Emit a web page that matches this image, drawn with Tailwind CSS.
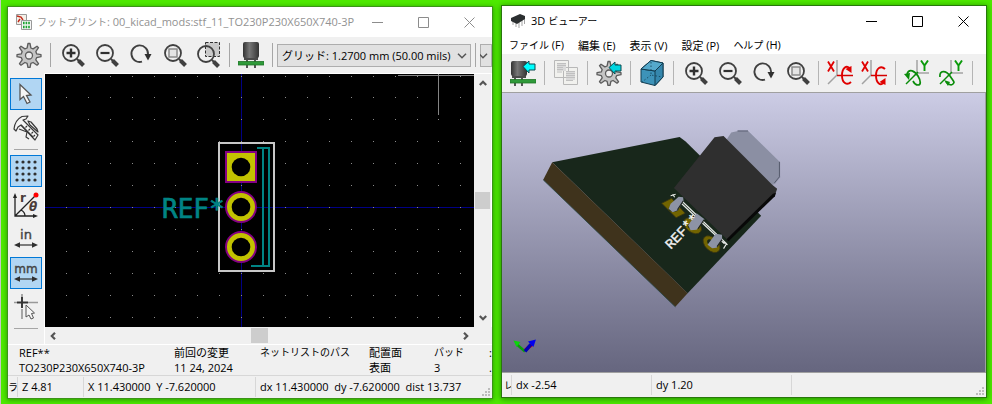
<!DOCTYPE html>
<html lang="ja">
<head>
<meta charset="utf-8">
<meta name="viewport" content="width=device-width, initial-scale=1">
<title>フットプリント / 3D ビューアー</title>
<script src="https://cdn.jsdelivr.net/npm/@tailwindcss/browser@4"></script>
</head>
<body class="h-screen overflow-hidden bg-[#4eea00] font-['Open_Sans','Noto_Sans_CJK_JP',sans-serif] text-[11px] leading-[15px] text-black">

<!-- Shared icon shapes -->
<svg class="absolute size-0" aria-hidden="true">
  <defs>
    <g id="lens" fill="none" stroke="#404040">
      <circle cx="12" cy="11" r="8" stroke-width="1.8"/>
      <path d="M18 17l2 2" stroke-width="2"/>
      <path d="M19.5 18.5l5 5" stroke-width="4"/>
    </g>
    <symbol id="zoom-in" viewBox="0 0 26 26"><use href="#lens"/><path d="M12 6.5v9M7.500 11h9" stroke="#303030" stroke-width="2.4"/></symbol>
    <symbol id="zoom-out" viewBox="0 0 26 26"><use href="#lens"/><path d="M7.500 11h9" stroke="#303030" stroke-width="2.2"/></symbol>
    <symbol id="redraw" viewBox="0 0 26 26"><path d="M15 19.700A8.300 8.300 0 1 1 21 12.500" fill="none" stroke="#404040" stroke-width="1.9"/><path d="M17.500 12h7l-3.500 6.500z" fill="#303030"/></symbol>
    <symbol id="zoom-fit" viewBox="0 0 26 26"><use href="#lens"/><path d="M8 7h8v8H8z" fill="#e4e4e4" stroke="#8b8b8b" stroke-width="1.500"/></symbol>
    <symbol id="zoom-area" viewBox="0 0 26 26"><path d="M10.500 .500h14v14h-14z" fill="#c9c9c9" stroke="#303030" stroke-dasharray="3 1.500"/><g transform="translate(-1 1)"><use href="#lens"/></g></symbol>
    <symbol id="gear" viewBox="0 0 26 26">
      <path fill="#c4c4c4" stroke="#5c5c5c" stroke-width="1.300" stroke-linejoin="round" d="M12 1.500h2l.9 4.500 2.200.9 3.900-2.700 1.500 1.500-2.700 3.900.9 2.300 4.300.8v2l-4.300.9-.9 2.200 2.700 3.900-1.500 1.500-3.900-2.700-2.200.9-.9 4.100h-2l-.9-4.100-2.200-.9L5 23.200l-1.500-1.500 2.700-3.900-.9-2.200-4.300-.9v-2l4.300-.8.9-2.300-2.700-3.900L5 4.200l3.900 2.700 2.200-.9z"/>
      <circle cx="13" cy="13.500" r="3.500" fill="#efefef" stroke="#5c5c5c" stroke-width="1.300"/>
    </symbol>
    <linearGradient id="can" x1="0" x2="1"><stop offset="0" stop-color="#333"/><stop offset=".4" stop-color="#777"/><stop offset="1" stop-color="#333"/></linearGradient>
    <symbol id="part" viewBox="0 0 26 26">
      <path d="M5 18v8M12 18v8" stroke="#222" stroke-width="1.500"/>
      <rect x="2" y="13" width="14" height="5" fill="#4a4a4a"/>
      <rect x="1" y="1" width="16" height="15" rx="2" fill="url(#can)"/>
      <path d="M0 19.500h26v3.500H0z" fill="#2f9a3a" stroke="#207326" stroke-width=".8"/>
    </symbol>
    <symbol id="axes-x" viewBox="0 0 26 26">
      <path d="M10 0v15L1 24" fill="none" stroke="#a2a2a2" stroke-width="1.500"/>
      <path d="M10 15.500h16" stroke="#d40000" stroke-width="1.500"/>
      <path d="M1 1.500l6 10M7 1.500l-6 10" stroke="#e00000" stroke-width="1.800"/>
    </symbol>
    <symbol id="axes-y" viewBox="0 0 26 26">
      <path d="M13 0v13h12M13 13l-3 3" fill="none" stroke="#a2a2a2" stroke-width="1.500"/>
      <path d="M17 .500l3.500 5 3.500-5M20.500 5.500v5.500" fill="none" stroke="#0a9a0a" stroke-width="1.900"/>
      <path d="M2 24L14 12" stroke="#0a8c0a" stroke-width="1.500"/>
    </symbol>
    <symbol id="chev" viewBox="0 0 10 6"><path d="M1 .800l4 4 4-4" fill="none" stroke="#555" stroke-width="1.500"/></symbol>
    <symbol id="arrow" viewBox="0 0 8 6"><path d="M.8 5L4 1.800 7.200 5" fill="none" stroke="#555" stroke-width="2.200"/></symbol>
    <symbol id="dim" viewBox="0 0 26 8"><path d="M4 4h18" stroke="#303030" stroke-width="1.200"/><path d="M1 4l6-2.800v5.600zM25 4l-6-2.800v5.600z" fill="#303030"/></symbol>
    <symbol id="grip" viewBox="0 0 8 8"><path d="M6 0h2v2H6zM3 3h2v2H3zM6 3h2v2H6zM0 6h2v2H0zM3 6h2v2H3zM6 6h2v2H6z" fill="#bcbcbc"/></symbol>
  </defs>
</svg>

<main class="flex h-full gap-2 border-l border-[#c8c8c8] pl-1.5 pr-[5px]">

  <!-- Footprint window -->
  <section class="mb-[5px] mt-1.5 flex min-w-0 flex-1 flex-col border border-[#3c9418] bg-[#f0f0f0] shadow-[0_1px_5px_rgba(0,60,0,0.5)]">
    <header class="flex h-[30px] shrink-0 items-center bg-white text-[#929292]">
      <svg class="ml-2 size-4 shrink-0" viewBox="0 0 16 16" aria-hidden="true">
        <path d="M.5.500h10v10H.5z" fill="#f4f0e8" stroke="#999"/><path d="M1 2l4 1 2 3M4 5L2 8" stroke="#c02a1a" stroke-width="1.400" fill="none"/>
        <path d="M5.500 6.500h10v9h-10z" fill="#f5f5f5" stroke="#999"/><path d="M7 9h7M7 13h7" stroke="#17a32e" stroke-width="2.400" stroke-dasharray="1.600 1"/>
      </svg>
      <h1 class="ml-[5px] min-w-0 flex-1 whitespace-nowrap"><span class="text-[10px]">フットプリント</span>: 00_kicad_mods:stf_11_TO230P230X650X740-3P</h1>
      <button class="grid h-full w-[46px] shrink-0 place-items-center" aria-label="最小化"><svg class="size-[11px]" viewBox="0 0 11 11"><path d="M0 5.500h11" stroke="#8c8c8c"/></svg></button>
      <button class="grid h-full w-[46px] shrink-0 place-items-center" aria-label="最大化"><svg class="size-[11px]" viewBox="0 0 11 11"><path d="M.5.500h10v10H.5z" fill="none" stroke="#8c8c8c"/></svg></button>
      <button class="grid h-full w-[46px] shrink-0 place-items-center" aria-label="閉じる"><svg class="size-[11px]" viewBox="0 0 11 11"><path d="M.5.500l10 10M10.500.500l-10 10" stroke="#8c8c8c"/></svg></button>
    </header>

    <div class="flex h-9 shrink-0 items-center overflow-hidden pl-1">
      <button class="grid h-8 w-[34px] shrink-0 place-items-center" aria-label="設定"><svg class="size-[26px]"><use href="#gear"/></svg></button>
      <div class="mx-1 h-6 w-px shrink-0 bg-[#a6a6a6]"></div>
      <button class="grid h-8 w-[34px] shrink-0 place-items-center" aria-label="ズームイン"><svg class="size-[26px]"><use href="#zoom-in"/></svg></button>
      <button class="grid h-8 w-[34px] shrink-0 place-items-center" aria-label="ズームアウト"><svg class="size-[26px]"><use href="#zoom-out"/></svg></button>
      <button class="grid h-8 w-[34px] shrink-0 place-items-center" aria-label="再描画"><svg class="size-[26px]"><use href="#redraw"/></svg></button>
      <button class="grid h-8 w-[34px] shrink-0 place-items-center" aria-label="全体表示"><svg class="size-[26px]"><use href="#zoom-fit"/></svg></button>
      <button class="grid h-8 w-[34px] shrink-0 place-items-center" aria-label="範囲ズーム"><svg class="size-[26px]"><use href="#zoom-area"/></svg></button>
      <div class="mx-1 h-6 w-px shrink-0 bg-[#a6a6a6]"></div>
      <button class="grid h-8 w-[34px] shrink-0 place-items-center" aria-label="3D 表示"><svg class="size-[26px]" viewBox="0 0 26 26"><path d="M9 18v8M17 18v8" stroke="#222" stroke-width="1.500"/><rect x="6" y="13" width="14" height="5" fill="#4a4a4a"/><rect x="5" y="0" width="16" height="16" rx="2" fill="url(#can)"/><path d="M0 19.500h26v3.500H0z" fill="#2f9a3a" stroke="#207326" stroke-width=".8"/></svg></button>
      <div class="mx-1 h-6 w-px shrink-0 bg-[#a6a6a6]"></div>
      <div class="relative min-w-0 flex-1">
        <select aria-label="グリッド" class="h-[23px] w-full appearance-none rounded-none border border-[#adadad] bg-[#e1e1e1] pl-1"><option>グリッド: 1.2700 mm (50.00 mils)</option></select>
        <svg class="pointer-events-none absolute right-1 top-[9px] h-1.5 w-2.5"><use href="#chev"/></svg>
      </div>
      <div class="mx-1 h-6 w-px shrink-0 bg-[#a6a6a6]"></div>
      <div class="relative w-3 shrink-0">
        <select aria-label="ズーム" class="h-[23px] w-full appearance-none rounded-none border border-[#adadad] bg-[#e1e1e1]"><option></option></select>
        <svg class="pointer-events-none absolute left-0 top-[9px] h-1.5 w-2" viewBox="2 0 8 6"><path d="M1 .800l4 4 4-4" fill="none" stroke="#555" stroke-width="1.500"/></svg>
      </div>
    </div>

    <div class="flex min-h-0 flex-1">
      <nav class="flex w-9 shrink-0 flex-col items-center gap-0.5 overflow-hidden pt-[5px]" aria-label="ツール">
        <button class="grid size-8 shrink-0 place-items-center border border-[#0078d7] bg-[#b1d6f3]" aria-label="選択"><svg class="size-[26px]" viewBox="0 0 26 26"><path d="M7 3.500v15l3.500-3 3.500 7 3-1.500-3.500-6.500 4.500-.5z" fill="#f5f5f5" stroke="#555" stroke-width="1.300"/></svg></button>
        <button class="grid size-8 shrink-0 place-items-center" aria-label="計測"><svg class="size-[26px]" viewBox="0 0 26 26" fill="#f4f4f4" stroke="#383838" stroke-width="1.200" stroke-linejoin="round"><path d="M1 14Q2 5 9 1.500L15 1l-2 3-3 1 15 15-3 5L8 10l-3 2-2 4z"/><path d="M15 6l3 1 6 7 1 3-8-7z"/><path d="M6 14l8 3-1 5 3 2M8 10l12 12M17 14l-1.500 1.500M20 17l-1.500 1.500M22 20l-1.500 1.500M14 11l-1.500 1.500" fill="none"/></svg></button>
        <div class="my-[3px] h-px w-6 shrink-0 bg-[#a6a6a6]"></div>
        <button class="grid size-8 shrink-0 place-items-center border border-[#0078d7] bg-[#b1d6f3]" aria-label="グリッド表示"><svg class="size-[26px]" viewBox="0 0 26 26" stroke="#303030" stroke-width="3.200" stroke-linecap="round" stroke-dasharray="0 6"><path d="M4 4h19M4 10h19M4 16h19M4 22h19"/></svg></button>
        <button class="grid size-8 shrink-0 place-items-center" aria-label="極座標"><svg class="size-[26px]" viewBox="0 0 26 26"><path d="M2 4v20h20M2 24L22 4M8 18q4 2 4 6" fill="none" stroke="#222" stroke-width="1.300"/><path d="M0 6l2-5 2 5zM20 22l5 2-5 2z" fill="#222"/><circle cx="23" cy="3" r="2.500" fill="#f00"/><text x="7" y="10" class="fill-[#4a3b38] font-['DejaVu_Sans'] text-[12px] font-bold">r</text><text x="16" y="19" class="fill-[#4a3b38] font-['DejaVu_Sans'] text-[12px] font-bold italic">θ</text></svg></button>
        <button class="flex size-8 shrink-0 flex-col items-center justify-center font-['DejaVu_Sans'] text-[13px] leading-3 text-[#444] [-webkit-text-stroke:0.4px]">in<svg class="h-2 w-[26px]"><use href="#dim"/></svg></button>
        <button class="flex size-8 shrink-0 flex-col items-center justify-center border border-[#0078d7] bg-[#b1d6f3] font-['DejaVu_Sans'] text-[12px] leading-3 text-[#444] [-webkit-text-stroke:0.4px]">mm<svg class="h-2 w-[26px]"><use href="#dim"/></svg></button>
        <button class="grid size-8 shrink-0 place-items-center" aria-label="カーソル形状"><svg class="size-[26px]" viewBox="0 0 26 26"><path d="M9 0v5M9 15v10M1 8.500h3M15 8.500h10" stroke="#999" stroke-width="1.700"/><path d="M9 3v11M4 8.500h11" stroke="#333" stroke-width="1.900"/><path d="M13 11v12l3-2 2 4 2.500-1-2-4.500 3-.5z" fill="#f5f5f5" stroke="#555"/></svg></button>
        <div class="my-[3px] h-px w-6 shrink-0 bg-[#a6a6a6]"></div>
      </nav>

      <div class="flex min-w-0 flex-1 flex-col border-l border-t border-white">
        <div class="flex min-h-0 flex-1">
          <svg class="h-full min-w-0 flex-1 bg-black" viewBox="45 74 429 253" preserveAspectRatio="xMinYMin slice" role="img" aria-label="フットプリント図">
            <path d="M0 207.500h992M241.500 0v404" stroke="#000084"/>
            <g id="dots" fill="#8c8c8c"></g>
            <path d="M398 75.500h120M438.500 60v55" stroke="#848484"/>
            <g fill="none" stroke="#008484" stroke-width="2"><path d="M257 148h12v118h-18M263 148v118"/></g>
            <rect x="219" y="143" width="55" height="128" fill="none" stroke="#c8c8c8" stroke-width="2"/>
            <g fill="#c2c200" stroke="#840084" stroke-width="2"><path d="M226 152h30v30h-30z"/><circle cx="241" cy="207" r="15"/><circle cx="241" cy="247" r="15"/></g>
            <circle cx="241" cy="167" r="9.300"/><circle cx="241" cy="207" r="9.300"/><circle cx="241" cy="247" r="9.300"/>
            <text x="162" y="218" class="fill-[#008484] stroke-[#008484] font-['DejaVu_Sans_Mono',monospace] text-[26px]" stroke-width=".7">REF*</text>
          </svg>
          <div class="flex w-[18px] shrink-0 flex-col items-center justify-between border-r border-white bg-[#f0f0f0] py-1.5">
            <svg class="h-1.5 w-2"><use href="#arrow"/></svg>
            <div class="h-[17px] w-[15px] bg-[#cdcdcd]"></div>
            <svg class="h-1.5 w-2 rotate-180"><use href="#arrow"/></svg>
          </div>
        </div>
        <div class="mr-[18px] flex h-[17px] shrink-0 items-center justify-between bg-[#f0f0f0] px-1">
          <svg class="h-1.5 w-2 -rotate-90"><use href="#arrow"/></svg>
          <div class="h-[15px] w-[17px] bg-[#cdcdcd]"></div>
          <svg class="h-1.5 w-2 rotate-90"><use href="#arrow"/></svg>
        </div>
      </div>
    </div>

    <dl class="grid h-[31px] shrink-0 grid-cols-[155px_86px_109px_65px_55px_4px] overflow-hidden whitespace-nowrap border-t border-white pl-[11px]">
      <div><dt>REF**</dt><dd>TO230P230X650X740-3P</dd></div>
      <div><dt>前回の変更</dt><dd>11 24, 2024</dd></div>
      <div><dt class="text-[10px]">ネットリストのパス</dt></div>
      <div><dt>配置面</dt><dd>表面</dd></div>
      <div><dt class="text-[10px]">パッド</dt><dd>3</dd></div>
      <div><dt>:</dt><dd>.</dd></div>
    </dl>

    <footer class="flex h-[23px] shrink-0 items-center whitespace-pre border-t border-[#d7d7d7]">
      <span class="w-2.5 overflow-hidden border-r border-[#d7d7d7] text-[10px] leading-5">ラ</span>
      <span class="w-[66px] border-r border-[#d7d7d7] pl-1 leading-5">Z 4.81</span>
      <span class="w-[172px] border-r border-[#d7d7d7] pl-1 leading-5">X 11.430000  Y -7.620000</span>
      <span class="flex-1 pl-1 leading-5">dx 11.430000  dy -7.620000  dist 13.737</span>
      <svg class="mb-0.5 mr-0.5 size-2 self-end"><use href="#grip"/></svg>
    </footer>
  </section>

  <!-- 3D viewer window -->
  <section class="mb-1.5 mt-[5px] flex min-w-0 flex-1 flex-col border border-[#28780c] bg-[#f0f0f0] shadow-[0_1px_6px_rgba(0,60,0,0.6)]">
    <header class="flex h-[30px] shrink-0 items-center bg-white">
      <svg class="ml-2 size-4 shrink-0" viewBox="0 0 16 16" aria-hidden="true"><path d="M3 8v4M6 9v5M9 9v6M12 6v7M14.500 4v7" stroke="#a5a5a5"/><path d="M1 5l9-4 5 2v3L7 11 1 8z" fill="#2b2f30"/></svg>
      <h1 class="ml-[5px] flex-1 whitespace-nowrap">3D <span class="text-[10px]">ビューアー</span></h1>
      <button class="grid h-full w-[46px] shrink-0 place-items-center" aria-label="最小化"><svg class="size-[11px]" viewBox="0 0 11 11"><path d="M0 5.500h11" stroke="#000"/></svg></button>
      <button class="grid h-full w-[46px] shrink-0 place-items-center" aria-label="最大化"><svg class="size-[11px]" viewBox="0 0 11 11"><path d="M.5.500h10v10H.5z" fill="none" stroke="#000"/></svg></button>
      <button class="grid h-full w-[46px] shrink-0 place-items-center" aria-label="閉じる"><svg class="size-[11px]" viewBox="0 0 11 11"><path d="M.5.500l10 10M10.500.500l-10 10" stroke="#000"/></svg></button>
    </header>
    <nav class="flex h-[18px] shrink-0 items-center gap-3.5 whitespace-nowrap bg-white pl-[7px]" aria-label="メニュー">
      <button><span class="text-[10px]">ファイル</span> (F)</button>
      <button>編集 (E)</button>
      <button>表示 (V)</button>
      <button>設定 (P)</button>
      <button><span class="text-[10px]">ヘルプ</span> (H)</button>
    </nav>
    <div class="flex h-[39px] shrink-0 items-center overflow-hidden border-b border-[#a0a0a0] pl-1">
      <button class="grid h-8 w-[34px] shrink-0 place-items-center" aria-label="基板を再読込"><svg class="size-[26px]" viewBox="0 0 26 26"><use href="#part"/><path d="M13 6.500l6-5.500v3h6v6h-6v3z" fill="#0ff" stroke="#0a4a50"/></svg></button>
      <div class="mx-1 h-6 w-px shrink-0 bg-[#b4b4b4]"></div>
      <button class="grid h-8 w-[34px] shrink-0 place-items-center" aria-label="コピー"><svg class="size-[26px]" viewBox="0 0 26 26"><path d="M1.500.500h14v17h-14zM10.500 7.500h14v17h-14z" fill="#f1f1ee" stroke="#b8b8b8"/><path d="M4 3h9v8H4zM13 11h9v9h-9z" fill="#dadada"/><path d="M4 3.500h9M4 5.500h9M4 7.500h6M4 9.500h6M4 12h5M13 11.500h9M13 13.500h9M13 15.500h9M13 17.500h9M13 20.500h7" stroke="#c0c0c0"/></svg></button>
      <div class="mx-1 h-6 w-px shrink-0 bg-[#b4b4b4]"></div>
      <button class="grid h-8 w-[34px] shrink-0 place-items-center" aria-label="オプション"><svg class="size-[26px]" viewBox="0 0 26 26"><use href="#gear"/><path d="M13 7.500L19 2v3h6v6h-6v3z" fill="#00d5e0" stroke="#0a4a50"/></svg></button>
      <div class="mx-1 h-6 w-px shrink-0 bg-[#b4b4b4]"></div>
      <button class="grid h-8 w-[34px] shrink-0 place-items-center" aria-label="レイトレーシング"><svg class="size-[26px]" viewBox="0 0 26 26"><path d="M2 9l10-8.500L24 3v14l-8 8.500L2 22z" fill="#3d93b9" stroke="#123c50"/><path d="M2 9l14 2L24 3v14l-8 8.500V11" fill="#3587ad" stroke="#123c50"/><path d="M2 9L12 .5 24 3l-8 8z" fill="#55a9cb" stroke="#123c50"/><path d="M12 2v13l11 2M12 15l-9 7" fill="none" stroke="#123c50" stroke-dasharray="1.500 2" stroke-width=".8"/></svg></button>
      <div class="mx-1 h-6 w-px shrink-0 bg-[#b4b4b4]"></div>
      <button class="grid h-8 w-[34px] shrink-0 place-items-center" aria-label="ズームイン"><svg class="size-[26px]"><use href="#zoom-in"/></svg></button>
      <button class="grid h-8 w-[34px] shrink-0 place-items-center" aria-label="ズームアウト"><svg class="size-[26px]"><use href="#zoom-out"/></svg></button>
      <button class="grid h-8 w-[34px] shrink-0 place-items-center" aria-label="再描画"><svg class="size-[26px]"><use href="#redraw"/></svg></button>
      <button class="grid h-8 w-[34px] shrink-0 place-items-center" aria-label="全体表示"><svg class="size-[26px]"><use href="#zoom-fit"/></svg></button>
      <div class="mx-1 h-6 w-px shrink-0 bg-[#b4b4b4]"></div>
      <button class="grid h-8 w-[34px] shrink-0 place-items-center" aria-label="X 軸 時計回り"><svg class="size-[26px]" viewBox="0 0 26 26"><use href="#axes-x"/><path d="M24 22c-4 4-9 1-9-6.500S20 4 23 9" fill="none" stroke="#e00000" stroke-width="1.900"/><path d="M24.500 6v7l-6-4z" fill="#e00000"/></svg></button>
      <button class="grid h-8 w-[34px] shrink-0 place-items-center" aria-label="X 軸 反時計回り"><svg class="size-[26px]" viewBox="0 0 26 26"><use href="#axes-x"/><path d="M24 9c-4-4-9-1-9 6.500S20 27 23 22" fill="none" stroke="#e00000" stroke-width="1.900"/><path d="M24.500 25v-7l-6 4z" fill="#e00000"/></svg></button>
      <div class="mx-1 h-6 w-px shrink-0 bg-[#b4b4b4]"></div>
      <button class="grid h-8 w-[34px] shrink-0 place-items-center" aria-label="Y 軸 時計回り"><svg class="size-[26px]" viewBox="0 0 26 26"><use href="#axes-y"/><path d="M3 14c2-6 8-3 11 2s3 9 0 9-4-2-5-4" fill="none" stroke="#0a8c0a" stroke-width="1.700"/><path d="M0 14l6-1-1 7z" fill="#0a8c0a"/></svg></button>
      <button class="grid h-8 w-[34px] shrink-0 place-items-center" aria-label="Y 軸 反時計回り"><svg class="size-[26px]" viewBox="0 0 26 26"><use href="#axes-y"/><path d="M2 17c-1-7 6-7 10-1s5 6 3 8-5 0-7-2" fill="none" stroke="#0a8c0a" stroke-width="1.700"/><path d="M6 20l6 2-2 4z" fill="#0a8c0a"/></svg></button>
      <div class="mx-1 h-6 w-px shrink-0 bg-[#b4b4b4]"></div>
    </div>
    <div class="min-h-0 flex-1 border-b border-r border-[#a0a0a0] bg-linear-to-b from-[#cccce5] to-[#66667f]">
      <svg class="size-full" viewBox="502 93 484 280" preserveAspectRatio="xMinYMin slice" role="img" aria-label="3D モデル">
        <path d="M552.300 162.300L680 137l6 4.500L761.700 216 688 293.700z" fill="#18271b"/>
        <path d="M552.300 162.300l-9 17.700 132.400 127.300 12.300-13.600z" fill="#3f331c"/>
        <path d="M543.300 180l132.400 127.300" stroke="#23423f" stroke-width=".8"/>
        <g fill="#726400" stroke="#3a3510" stroke-width=".8">
          <path d="M662 203.500l10-5 13.500 15-9 4.500z"/>
          <ellipse cx="693" cy="226" rx="10" ry="6.500" transform="rotate(38 693 226)"/>
          <ellipse cx="712" cy="244.500" rx="10" ry="6.500" transform="rotate(44 712 244.500)"/>
        </g>
        <g fill="#18271b"><ellipse cx="674" cy="209" rx="5" ry="3"/><ellipse cx="693" cy="226" rx="5" ry="3"/><ellipse cx="712" cy="244" rx="5.500" ry="3" transform="rotate(44 712 244)"/></g>
        <path d="M671 196l5-1.500M673 194.500l2 3M680 202l45 42M683 202l44 42M727 244l-3 5M724 242l4 3" fill="none" stroke="#e4e7e4" stroke-width="1.200"/>
        <path d="M727.300 139.300l4.400-6.600 7-1.700h10l32 31.300v15L775.700 184l-3.500 1.500z" fill="#8b8fa3"/>
        <path d="M738 131h10.500M780 162v15l-5 6" fill="none" stroke="#555a6c"/>
        <path d="M674.300 188.300L715 137.300l9-1.300 3.300 3.300L772.700 185l5 4-2 6L729 241z" fill="#2f2f2f"/>
        <path d="M727 239.500l46.500-45.500 3-1-1 3.500L729 241.500z" fill="#080808"/>
        <g fill="#8d93a5"><path d="M679 197l4.500.5.500 4-6 9-5 2-4-3.500 2-5z"/><path d="M697 213.500l8 6-8 10.500-6 .5-2.500-5z"/><path d="M716 234l6.500 1v5L717 248l-4.500.5-4.500-3.500z"/></g>
        <path d="M683.800 201l-6 9M704.500 220l-6 9M722.500 240l-5 7" stroke="#202521" stroke-width="1.200"/>
        <text transform="translate(671 250) rotate(-46)" class="fill-[#f0f0f0] stroke-[#f0f0f0] font-['Liberation_Mono',monospace] text-[14px]" stroke-width=".4">REF**</text>
        <path d="M525 351l7-6" stroke="#d00" stroke-width="3.500"/>
        <path d="M525 352l-8-7" stroke="#0a9e0a" stroke-width="2.500"/><path d="M513.500 341l7 1.500-4 5z" fill="#0bd60b"/>
        <path d="M525 352l6-7" stroke="#0000b8" stroke-width="3.500"/><path d="M536 340l-8 2 5.500 5.500z" fill="#0000f0"/>
      </svg>
    </div>
    <footer class="flex h-6 shrink-0 items-center whitespace-pre">
      <span class="w-2.5 overflow-hidden border-r border-[#d7d7d7] pl-0.5 text-[10px] leading-5">レ</span>
      <span class="w-[140px] border-r border-[#d7d7d7] pl-1 leading-5">dx -2.54</span>
      <span class="w-[140px] border-r border-[#d7d7d7] pl-1 leading-5">dy 1.20</span>
      <svg class="mb-0.5 ml-auto mr-0.5 size-2 self-end"><use href="#grip"/></svg>
    </footer>
  </section>
</main>

<script>
  // Snap each grid point to a whole pixel around the origin of the footprint.
  const dots = document.getElementById('dots');
  for (let i = -20; i <= 20; i++) {
    for (let j = -10; j <= 10; j++) {
      const r = document.createElementNS('http://www.w3.org/2000/svg', 'rect');
      r.setAttribute('x', Math.floor(241.7 + 21.92 * i));
      r.setAttribute('y', Math.floor(207.6 + 21.92 * j));
      r.setAttribute('width', 1);
      r.setAttribute('height', 1);
      dots.appendChild(r);
    }
  }
</script>
</body>
</html>
